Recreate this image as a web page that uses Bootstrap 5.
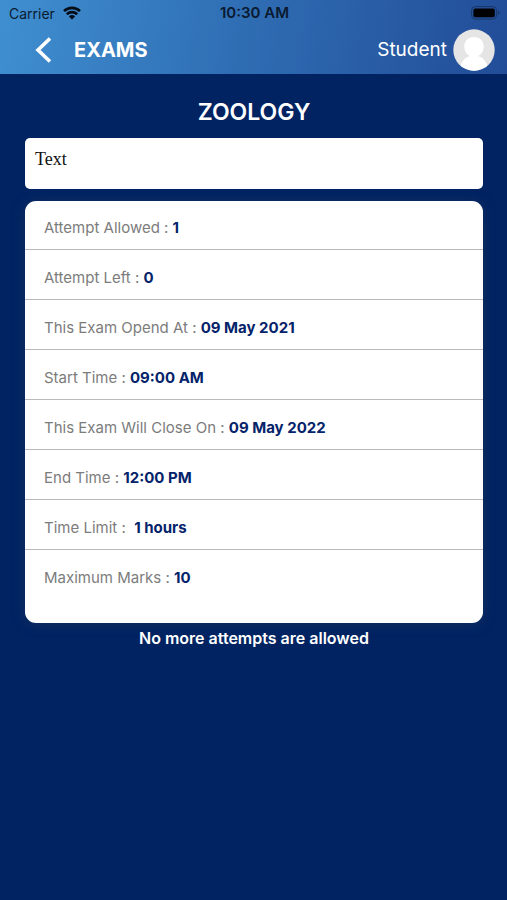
<!DOCTYPE html>
<html lang="en">
<head>
<meta charset="utf-8">
<meta name="viewport" content="width=device-width, initial-scale=1">
<title>Exams</title>
<link href="https://cdn.jsdelivr.net/npm/bootstrap@5.3.0/dist/css/bootstrap.min.css" rel="stylesheet">
<style>
  body { background: #012362; font-family: Inter, "Open Sans", sans-serif; }
  .app-header { background: linear-gradient(100deg, #3f8fd0 0%, #2f6db3 48%, #224c98 100%); }
  .status-bar { height: 26px; padding: 0 7px 0 9px; font-size: 14px; color: #0a1a30; }
  .status-clock { font-size: 15px; font-weight: 600; }
  .title-bar { height: 48px; padding: 0 12px 0 34px; }
  .back-btn { width: 20px; line-height: 0; }
  .page-name { font-size: 20px; font-weight: 700; line-height: 24px; margin-left: 20px; }
  .user-link { font-size: 19px; line-height: 24px; gap: 6px; }
  .content { padding: 24px 24px 0 25px; }
  .subject { font-size: 23px; font-weight: 600; line-height: 28px; margin-bottom: 12px; }
  .note-box { min-height: 51px; padding: 9px 10px; margin-bottom: 12px; border-radius: 5px; font: 18px/24px "Liberation Serif", "Times New Roman", serif; color: #111; }
  .details { --bs-list-group-border-color: #b9b9b9; border-radius: 11px; padding-bottom: 24px; box-shadow: 0 1px 12px #14305f; }
  .details .list-group-item { padding: 17px 19px 10px; font-size: 15px; line-height: 22px; color: #7c7c7c; background: transparent; }
  .details .list-group-item:first-child { padding-top: 16px; }
  .details .list-group-item:last-child { border-bottom: 0; }
  .details strong { color: #04236a; font-weight: 700; }
  .notice { font-size: 16px; font-weight: 600; line-height: 20px; margin-top: 5px; }
</style>
</head>
<body>
<header class="app-header text-white">
  <div class="status-bar row g-0 align-items-center">
    <div class="col d-flex align-items-center gap-2">
      <span>Carrier</span>
      <svg width="18" height="14" viewBox="0 0 18 14" fill="none" stroke="#050d18" stroke-width="2.6" aria-hidden="true"><path d="M1 5.1a11.6 11.6 0 0 1 16 0M3.8 8.2a7.6 7.6 0 0 1 10.4 0"/><path d="M9 13.6 5.900 10.5a4.5 4.5 0 0 1 6.200 0Z" fill="#050d18" stroke="none"/></svg>
    </div>
    <div class="col-auto status-clock">10:30 AM</div>
    <div class="col d-flex justify-content-end">
      <svg width="29" height="14" viewBox="0 0 29 14" aria-hidden="true"><rect x=".6" y=".6" width="25" height="12.4" rx="3.8" fill="none" stroke="#173766"/><rect x="2.4" y="2.4" width="21.4" height="8.8" rx="2" fill="#000"/><path d="M27 4.8c2 .8 2 3.2 0 4Z" fill="#173766"/></svg>
    </div>
  </div>
  <nav class="title-bar d-flex align-items-center" aria-label="Page">
    <button type="button" class="back-btn btn p-0 border-0" aria-label="Back">
      <svg width="20" height="28" viewBox="0 0 20 28" fill="none" stroke="#fff" stroke-width="3.6"><path d="M16 2.500 4 14l12 11.500"/></svg>
    </button>
    <h1 class="page-name mb-0">EXAMS</h1>
    <a href="#" class="user-link d-flex align-items-center ms-auto text-white text-decoration-none">
      <span>Student</span>
      <svg width="42" height="42" viewBox="0 0 42 42" aria-hidden="true"><defs><clipPath id="face"><circle cx="21" cy="21" r="20.7"/></clipPath></defs><g clip-path="url(#face)"><path fill="#e6e5e5" d="M0 0h42v42H0z"/><path fill="#fff" d="M21 8c5.800 0 9.700 4 9.700 9.600 0 4.500-2.200 8-5.700 9.400 5 1.400 9.500 5.500 10.500 15h-29C7.500 32.500 12 28.400 17 27c-3.500-1.400-5.700-4.900-5.700-9.400C11.300 12 15.200 8 21 8Z"/></g></svg>
    </a>
  </nav>
</header>
<main class="content">
  <h2 class="subject text-white text-center">ZOOLOGY</h2>
  <div class="note-box bg-white">Text</div>
  <ul class="details list-group list-group-flush bg-white mb-0">
    <li class="list-group-item">Attempt Allowed : <strong>1</strong></li>
    <li class="list-group-item">Attempt Left : <strong>0</strong></li>
    <li class="list-group-item">This Exam Opend At : <strong>09 May 2021</strong></li>
    <li class="list-group-item">Start Time : <strong>09:00 AM</strong></li>
    <li class="list-group-item">This Exam Will Close On : <strong>09 May 2022</strong></li>
    <li class="list-group-item">End Time : <strong>12:00 PM</strong></li>
    <li class="list-group-item">Time Limit : &nbsp;<strong>1 hours</strong></li>
    <li class="list-group-item">Maximum Marks : <strong>10</strong></li>
  </ul>
  <p class="notice text-white text-center mb-0">No more attempts are allowed</p>
</main>
<script src="https://cdn.jsdelivr.net/npm/bootstrap@5.3.0/dist/js/bootstrap.bundle.min.js"></script>
</body>
</html>
